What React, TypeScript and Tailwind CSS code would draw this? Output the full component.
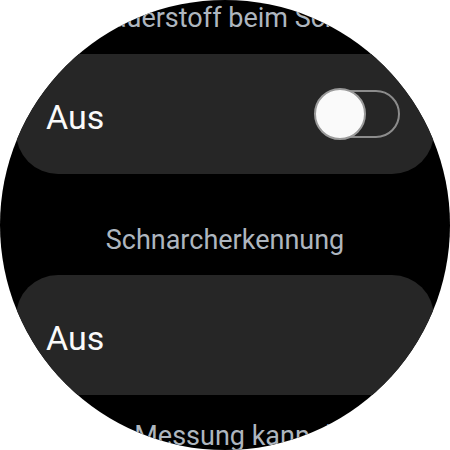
import React from "react";

function Toggle() {
  return (
    <div className="relative w-[84px] h-[48px] rounded-full border-2 border-[#8c8c8c] mr-[34px]">
      <div className="absolute left-[-4px] top-[-4px] w-[52px] h-[52px] rounded-full bg-[#fafafa] border-2 border-[#9a9a9a]" />
    </div>
  );
}

function Card({ children }: { children?: React.ReactNode }) {
  return (
    <div className="shrink-0 w-[418px] h-[120px] rounded-[42px] bg-[#262626] flex items-center justify-between">
      <span className="pl-[30px] pt-[5px] text-[34px] leading-[40px] text-[#fafafa]">Aus</span>
      {children}
    </div>
  );
}

export default function App() {
  return (
    <div className="w-[450px] h-[450px] bg-white" style={{ fontFamily: "Roboto, 'Noto Sans', sans-serif" }}>
      <div className="w-[450px] h-[450px] rounded-full bg-black overflow-hidden flex flex-col items-center">
        <p className="shrink-0 mt-[3px] text-[27px] leading-[30px] text-[#aeb6bf] whitespace-nowrap">
          Blutsauerstoff beim Schlafen
        </p>
        <div className="mt-[21px]">
          <Card>
            <Toggle />
          </Card>
        </div>
        <p className="shrink-0 mt-[51px] text-[27px] leading-[30px] text-[#aeb6bf] whitespace-nowrap">
          Schnarcherkennung
        </p>
        <div className="mt-[20px]">
          <Card />
        </div>
        <p className="shrink-0 mt-[26px] text-[27px] leading-[30px] text-[#aeb6bf] whitespace-nowrap">
          Die Messung kann den
        </p>
      </div>
    </div>
  );
}
